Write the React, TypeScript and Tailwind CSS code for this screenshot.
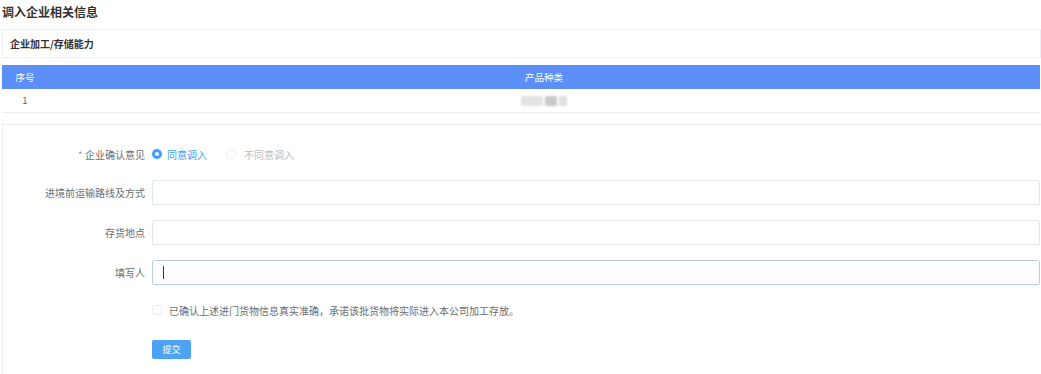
export default function App() {
  const font = { fontFamily: '"Noto Sans CJK SC", "Noto Sans", sans-serif' };

  const fields = [
    { label: '进境前运输路线及方式', focused: false },
    { label: '存货地点', focused: false },
    { label: '填写人', focused: true },
  ];

  return (
    <div className="w-[1041px] h-[374px] overflow-hidden bg-white pl-[2px] text-[#6b6d71]" style={font}>
      {/* Title */}
      <div className="h-[26px] pt-[3px] text-[12px] font-bold leading-[18px] text-[#303133]">调入企业相关信息</div>

      {/* Capability box */}
      <div className="mt-[3px] h-[29px] border border-[#ebeef5] px-[7px] flex items-center text-[10px] font-bold text-[#303133]">
        企业加工/存储能力
      </div>

      {/* Table */}
      <div className="mt-[7px] w-[1038px]">
        <div className="h-[24px] bg-[#5b8ef6] flex items-center text-[9.5px] text-white">
          <div className="w-[46px] text-center">序号</div>
          <div className="flex-1 text-center">产品种类</div>
        </div>
        <div className="h-[24px] border-b border-[#ebeef5] flex items-center text-[9.5px] text-[#606266]">
          <div className="w-[46px] text-center">1</div>
          <div className="flex-1 flex justify-center">
            <div className="flex gap-[2px] blur-[1px]">
              <div className="w-[22px] h-[10px] bg-[#e3e3e3]" />
              <div className="w-[12px] h-[10px] bg-[#c9c9c9]" />
              <div className="w-[8px] h-[10px] bg-[#e0e0e0]" />
            </div>
          </div>
        </div>
      </div>

      {/* Form panel */}
      <div className="mt-[11px] h-[260px] border-l border-t border-[#ebeef5] pt-[17px] text-[10px]">
        <div className="h-[24px] flex items-center">
          <div className="w-[149px] pr-[7px] text-right">
            <span className="text-[#a0a3a8]">*</span> 企业确认意见
          </div>
          <div className="flex items-center gap-[5px] text-[#409eff]">
            <span className="w-[10px] h-[10px] rounded-full bg-[#409eff] flex items-center justify-center">
              <span className="w-[4px] h-[4px] rounded-full bg-white" />
            </span>
            同意调入
          </div>
          <div className="ml-[19px] flex items-center gap-[8px] text-[#b8bcc4]">
            <span className="w-[10px] h-[10px] rounded-full border border-[#f0f0f0]" />
            不同意调入
          </div>
        </div>

        <div className="mt-[14px] flex flex-col gap-[15px]">
          {fields.map((f) => (
            <div key={f.label} className="h-[25px] flex items-center">
              <div className="w-[149px] pr-[7px] text-right">{f.label}</div>
              <div
                className={
                  'w-[888px] h-[25px] rounded-[2px] border bg-white flex items-center px-[10px] ' +
                  (f.focused ? 'border-[#bccde2]' : 'border-[#e4e7ed]')
                }
              >
                {f.focused && <span className="w-[1px] h-[13px] bg-[#303133]" />}
              </div>
            </div>
          ))}
        </div>

        <div className="mt-[19px] ml-[149px] h-[12px] flex items-center gap-[7px]">
          <span className="w-[10px] h-[10px] rounded-[2px] border border-[#ececec] bg-white" />
          <span>已确认上述进门货物信息真实准确，承诺该批货物将实际进入本公司加工存放。</span>
        </div>

        <div className="mt-[24px] ml-[149px]">
          <button className="w-[39px] h-[19px] rounded-[2px] bg-[#4da2f3] text-white text-[9px] leading-[19px]">
            提交
          </button>
        </div>
      </div>
    </div>
  );
}
